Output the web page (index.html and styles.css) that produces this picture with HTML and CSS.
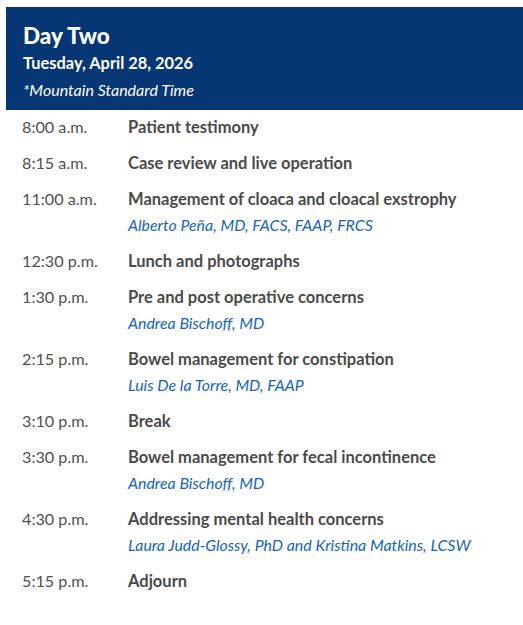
FILE: index.html
```html
<!DOCTYPE html>
<html lang="en">
<head>
<meta charset="utf-8">
<title>Day Two</title>
<link rel="stylesheet" href="styles.css">
</head>
<body>
<div class="page">
  <header class="day-header">
    <h1 class="day-title">Day Two</h1>
    <p class="day-date">Tuesday, April 28, 2026</p>
    <p class="day-tz">*Mountain Standard Time</p>
  </header>
  <ul class="agenda">
    <li class="row"><span class="time">8:00 a.m.</span><div class="item"><div class="title">Patient testimony</div></div></li>
    <li class="row"><span class="time">8:15 a.m.</span><div class="item"><div class="title">Case review and live operation</div></div></li>
    <li class="row"><span class="time">11:00 a.m.</span><div class="item"><div class="title">Management of cloaca and cloacal exstrophy</div><div class="speaker">Alberto Peña, MD, FACS, FAAP, FRCS</div></div></li>
    <li class="row"><span class="time">12:30 p.m.</span><div class="item"><div class="title">Lunch and photographs</div></div></li>
    <li class="row"><span class="time">1:30 p.m.</span><div class="item"><div class="title">Pre and post operative concerns</div><div class="speaker">Andrea Bischoff, MD</div></div></li>
    <li class="row"><span class="time">2:15 p.m.</span><div class="item"><div class="title">Bowel management for constipation</div><div class="speaker">Luis De la Torre, MD, FAAP</div></div></li>
    <li class="row"><span class="time">3:10 p.m.</span><div class="item"><div class="title">Break</div></div></li>
    <li class="row"><span class="time">3:30 p.m.</span><div class="item"><div class="title">Bowel management for fecal incontinence</div><div class="speaker">Andrea Bischoff, MD</div></div></li>
    <li class="row"><span class="time">4:30 p.m.</span><div class="item"><div class="title">Addressing mental health concerns</div><div class="speaker">Laura Judd-Glossy, PhD and Kristina Matkins, LCSW</div></div></li>
    <li class="row"><span class="time">5:15 p.m.</span><div class="item"><div class="title">Adjourn</div></div></li>
  </ul>
</div>
</body>
</html>
```

FILE: styles.css
```css
html, body {
  margin: 0;
  padding: 0;
  background: #ffffff;
}

.page {
  padding: 7px 0 0 6px;
  font-family: Lato, "Open Sans", sans-serif;
}

.day-header {
  background: #063673;
  color: #ffffff;
  padding: 17px 17px 12px;
  height: 103px;
  box-sizing: border-box;
}

.day-title {
  margin: 0;
  font-size: 22.5px;
  font-weight: 900;
  line-height: 24px;
}

.day-date {
  margin: 5px 0 0;
  font-size: 16.4px;
  font-weight: 700;
  line-height: 20px;
}

.day-tz {
  margin: 7px 0 0;
  font-size: 16px;
  font-style: italic;
  line-height: 20px;
}

.agenda {
  list-style: none;
  margin: 0;
  padding: 4px 0 0 16px;
}

.row {
  display: flex;
  padding-bottom: 10px;
}

.time {
  width: 106px;
  flex: none;
  font-size: 16.2px;
  line-height: 26px;
  color: #505050;
}

.title {
  font-size: 16.5px;
  font-weight: 700;
  line-height: 26px;
  color: #4a4a4a;
}

.speaker {
  font-size: 15.9px;
  font-style: italic;
  line-height: 26px;
  color: #1464c0;
}
```
